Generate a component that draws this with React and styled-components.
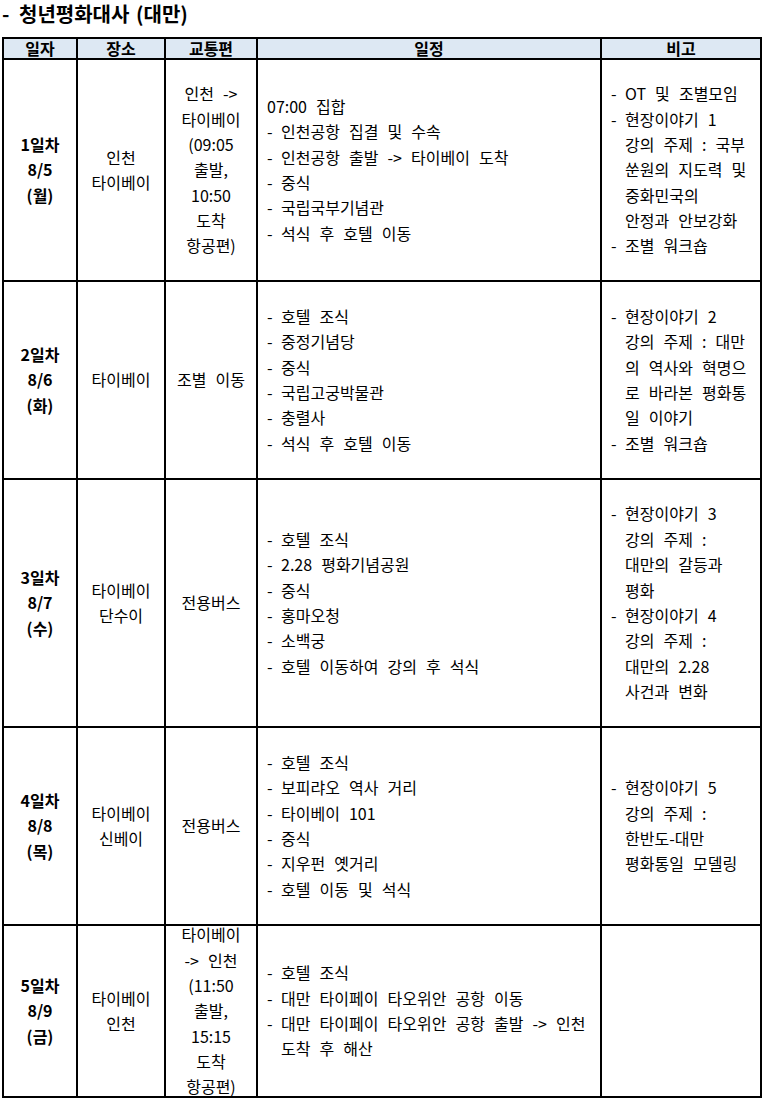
import React from "react";
import styled, { createGlobalStyle } from "styled-components";

const GlobalStyle = createGlobalStyle`
  html, body {
    margin: 0;
    padding: 0;
    background: #ffffff;
  }
  body {
    font-family: "Noto Sans CJK KR", "Noto Sans", sans-serif;
    color: #000;
  }
`;

const Page = styled.div`
  width: 764px;
  display: flex;
  flex-direction: column;
`;

const Title = styled.h1`
  margin: 0 0 10px 2px;
  display: flex;
  align-items: center;
  font-size: 20px;
  line-height: 27px;
  font-weight: 700;
  word-spacing: 2px;
  color: #000;
`;

const TitleDash = styled.span`
  width: 17px;
  flex: none;
`;

const Table = styled.div`
  display: grid;
  grid-template-columns: 72px 86px 90px 342px 158px;
  grid-template-rows: 19px 220px 196px 246px 196px 170px;
  gap: 2px;
  padding: 2px;
  margin-left: 2px;
  width: max-content;
  background: #000;
  font-size: 16px;
  line-height: 25.4px;
  word-spacing: 5.5px;
`;

const HeadCell = styled.div`
  background: #dde8f3;
  display: flex;
  align-items: center;
  justify-content: center;
  font-weight: 700;
  line-height: 19px;
`;

const Cell = styled.div`
  background: #fff;
  display: flex;
  flex-direction: column;
  justify-content: center;
  align-items: ${(p) => (p.$left ? "flex-start" : "center")};
  text-align: ${(p) => (p.$left ? "left" : "center")};
  padding: 0 ${(p) => (p.$left ? "9px" : "0")};
  font-weight: ${(p) => (p.$bold ? 700 : 400)};
  white-space: nowrap;
`;

const Line = styled.div`
  height: 25.4px;
`;

const Entry = styled.div`
  display: flex;
`;

const Marker = styled.span`
  width: 14px;
  flex: none;
`;

const Lines = styled.div`
  display: flex;
  flex-direction: column;
`;

const item = (...lines) => ({ dash: true, lines });
const plain = (...lines) => ({ dash: false, lines });

const days = [
  {
    day: ["1일차", "8/5", "(월)"],
    place: ["인천", "타이베이"],
    transport: ["인천 ->", "타이베이", "(09:05", "출발,", "10:50", "도착", "항공편)"],
    schedule: [
      plain("07:00 집합"),
      item("인천공항 집결 및 수속"),
      item("인천공항 출발 -> 타이베이 도착"),
      item("중식"),
      item("국립국부기념관"),
      item("석식 후 호텔 이동"),
    ],
    notes: [
      item("OT 및 조별모임"),
      item(
        "현장이야기 1",
        "강의 주제 : 국부",
        "쑨원의 지도력 및",
        "중화민국의",
        "안정과 안보강화"
      ),
      item("조별 워크숍"),
    ],
  },
  {
    day: ["2일차", "8/6", "(화)"],
    place: ["타이베이"],
    transport: ["조별 이동"],
    schedule: [
      item("호텔 조식"),
      item("중정기념당"),
      item("중식"),
      item("국립고궁박물관"),
      item("충렬사"),
      item("석식 후 호텔 이동"),
    ],
    notes: [
      item(
        "현장이야기 2",
        "강의 주제 : 대만",
        "의 역사와 혁명으",
        "로 바라본 평화통",
        "일 이야기"
      ),
      item("조별 워크숍"),
    ],
  },
  {
    day: ["3일차", "8/7", "(수)"],
    place: ["타이베이", "단수이"],
    transport: ["전용버스"],
    schedule: [
      item("호텔 조식"),
      item("2.28 평화기념공원"),
      item("중식"),
      item("홍마오청"),
      item("소백궁"),
      item("호텔 이동하여 강의 후 석식"),
    ],
    notes: [
      item("현장이야기 3", "강의 주제 :", "대만의 갈등과", "평화"),
      item("현장이야기 4", "강의 주제 :", "대만의 2.28", "사건과 변화"),
    ],
  },
  {
    day: ["4일차", "8/8", "(목)"],
    place: ["타이베이", "신베이"],
    transport: ["전용버스"],
    schedule: [
      item("호텔 조식"),
      item("보피랴오 역사 거리"),
      item("타이베이 101"),
      item("중식"),
      item("지우펀 옛거리"),
      item("호텔 이동 및 석식"),
    ],
    notes: [item("현장이야기 5", "강의 주제 :", "한반도-대만", "평화통일 모델링")],
  },
  {
    day: ["5일차", "8/9", "(금)"],
    place: ["타이베이", "인천"],
    transport: ["타이베이", "-> 인천", "(11:50", "출발,", "15:15", "도착", "항공편)"],
    schedule: [
      item("호텔 조식"),
      item("대만 타이페이 타오위안 공항 이동"),
      item("대만 타이페이 타오위안 공항 출발 -> 인천", "도착 후 해산"),
    ],
    notes: [],
  },
];

const headers = ["일자", "장소", "교통편", "일정", "비고"];

function EntryList({ entries }) {
  return entries.map((e, i) => (
    <Entry key={i}>
      {e.dash && <Marker>-</Marker>}
      <Lines>
        {e.lines.map((l, j) => (
          <Line key={j}>{l}</Line>
        ))}
      </Lines>
    </Entry>
  ));
}

function Stack({ lines }) {
  return lines.map((l, i) => <Line key={i}>{l}</Line>);
}

export default function App() {
  return (
    <Page>
      <GlobalStyle />
      <Title>
        <TitleDash>-</TitleDash>청년평화대사 (대만)
      </Title>
      <Table>
        {headers.map((h) => (
          <HeadCell key={h}>{h}</HeadCell>
        ))}
        {days.map((d) => (
          <React.Fragment key={d.day[0]}>
            <Cell $bold>
              <Stack lines={d.day} />
            </Cell>
            <Cell>
              <Stack lines={d.place} />
            </Cell>
            <Cell>
              <Stack lines={d.transport} />
            </Cell>
            <Cell $left>
              <EntryList entries={d.schedule} />
            </Cell>
            <Cell $left>
              <EntryList entries={d.notes} />
            </Cell>
          </React.Fragment>
        ))}
      </Table>
    </Page>
  );
}
